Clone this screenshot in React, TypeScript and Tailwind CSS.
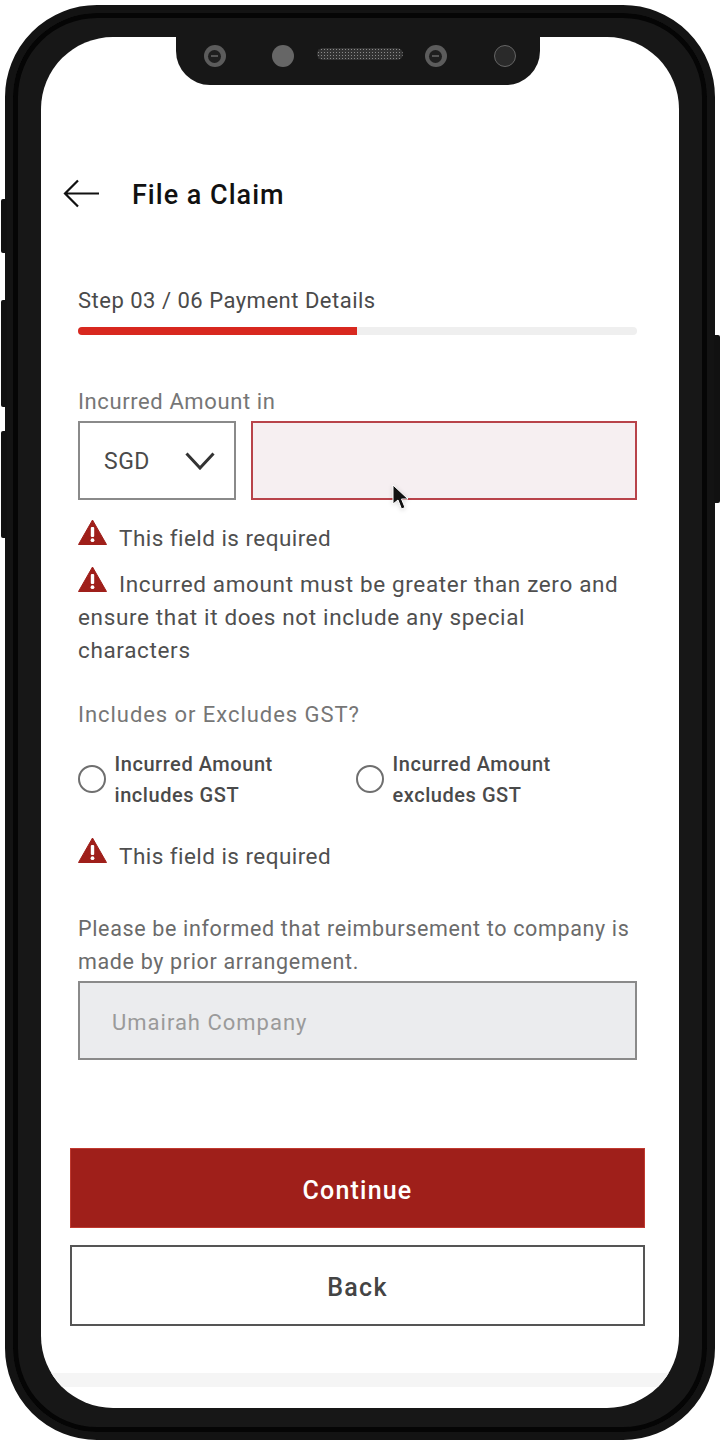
const FONT = "font-['Roboto','Liberation_Sans',sans-serif]";

const WarnIcon = ({ className = "" }: { className?: string }) => (
  <svg width="29" height="27" viewBox="0 0 29 27" className={`shrink-0 ${className}`}>
    <path d="M14.5 1 L28.5 25.5 L0.5 25.5 Z" fill="#9f1f1a" stroke="#9f1f1a" strokeLinejoin="round" />
    <rect x="12.8" y="8" width="3.4" height="10" rx="1" fill="#fff" />
    <circle cx="14.5" cy="21.2" r="1.9" fill="#fff" />
  </svg>
);

const Lens = () => (
  <div className="w-[22px] h-[22px] rounded-full bg-[#5c5c5c] flex items-center justify-center">
    <div className="w-[13px] h-[13px] rounded-full bg-[#1f1f1f] flex items-center justify-center">
      <div className="w-[7px] h-[2px] bg-[#555]" />
    </div>
  </div>
);

const Radio = ({ line1, line2 }: { line1: string; line2: string }) => (
  <div className="flex items-center w-[278px]">
    <div className="w-[28px] h-[28px] mb-[2px] rounded-full border-2 border-[#6f6f6f] bg-white shrink-0" />
    <div className="ml-[8.5px] text-[20px] leading-[31px] font-medium text-[#4a4a4a] tracking-[0.55px]">
      <div>{line1}</div>
      <div>{line2}</div>
    </div>
  </div>
);

const FieldError = ({ className }: { className: string }) => (
  <div className={`flex items-start h-[27px] ${className}`}>
    <WarnIcon />
    <span className="ml-[12px] mt-[4px] text-[22.5px] leading-[30px] text-[#4f4f4f] tracking-[0.45px]">This field is required</span>
  </div>
);

export default function App() {
  return (
    <div className={`relative w-[722px] h-[1444px] bg-white pl-[5px] pt-[5px] overflow-hidden ${FONT}`}>
      {/* side buttons */}
      <div className="absolute left-[1px] top-[199px] w-[6px] h-[54px] bg-[#111] rounded-l-[2px]" />
      <div className="absolute left-[1px] top-[300px] w-[6px] h-[107px] bg-[#111] rounded-l-[2px]" />
      <div className="absolute left-[1px] top-[431px] w-[6px] h-[107px] bg-[#111] rounded-l-[2px]" />
      <div className="absolute left-[714px] top-[335px] w-[6px] h-[168px] bg-[#111] rounded-r-[2px]" />

      <div className="w-[710px] h-[1435px] bg-[#171717] border-[8px] border-[#131313] shadow-[inset_0_0_0_5px_#050505] rounded-[92px] pl-[28px] pr-[28px] pt-[24px]">
        <div className="relative w-[638px] h-[1371px] bg-white rounded-[72px] overflow-hidden flex flex-col">
          {/* notch */}
          <div className="self-center ml-[-5px] w-[364px] h-[48px] bg-[#171717] rounded-b-[34px] flex items-center pl-[28px] pb-[10px] shrink-0">
            <Lens />
            <div className="ml-[46px] w-[22px] h-[22px] rounded-full bg-[#666]" />
            <div className="ml-[23px] mb-[4px] w-[86px] h-[12px] rounded-full bg-[#333] bg-[radial-gradient(#8a8a8a_1px,transparent_1px)] bg-[length:3px_3px]" />
            <div className="ml-[22px]"><Lens /></div>
            <div className="ml-[47px] w-[22px] h-[22px] rounded-full bg-[#2a2a2a] border border-[#666]" />
          </div>

          {/* header */}
          <div className="mt-[90px] ml-[22px] flex items-center h-[40px] shrink-0">
            <svg width="37" height="30" viewBox="0 0 37 30" fill="none" stroke="#111" strokeWidth="2.2" className="-mt-[2px]">
              <path d="M36 14.5 H2 M15 1.5 L2 14.5 L15 27.5" />
            </svg>
            <h1 className="ml-[32px] mt-[1px] text-[27px] font-medium text-[#111] tracking-[1px]">File a Claim</h1>
          </div>

          <div className="ml-[37px] mr-[42px] flex flex-col shrink-0">
            <div className="mt-[71px] text-[22px] leading-[30px] text-[#4a4a4a] tracking-[0.5px]">Step 03 / 06 Payment Details</div>
            <div className="mt-[11px] h-[8px] bg-[#efefef] rounded-full overflow-hidden">
              <div className="w-[279px] h-full bg-[#d8281f]" />
            </div>

            <div className="mt-[52px] text-[22px] leading-[30px] text-[#767676] tracking-[0.6px]">Incurred Amount in</div>
            <div className="mt-[4px] flex gap-[15px]">
              <div className="w-[158px] h-[79px] border-2 border-[#8a8a8a] flex items-center justify-between pl-[24px] pr-[19px]">
                <span className="mt-[3px] text-[23px] text-[#4a4a4a] tracking-[0.5px]">SGD</span>
                <svg width="30" height="18" viewBox="0 0 30 18" fill="none" stroke="#333" strokeWidth="3">
                  <path d="M1.5 1.5 L15 16 L28.5 1.5" />
                </svg>
              </div>
              <div className="relative flex-1 h-[79px] border-2 border-[#b8434a] bg-[#f6eff1]" />
            </div>

            <FieldError className="mt-[19px]" />

            <div className="mt-[22px] text-[22.5px] leading-[33px] text-[#4f4f4f] tracking-[0.65px]">
              <div className="flex items-start">
                <WarnIcon className="-mt-[2px]" />
                <span className="ml-[12px]">Incurred amount must be greater than zero and</span>
              </div>
              <div>ensure that it does not include any special</div>
              <div>characters</div>
            </div>

            <div className="mt-[33px] text-[22px] leading-[30px] text-[#767676] tracking-[0.95px]">Includes or Excludes GST?</div>

            <div className="mt-[19px] flex">
              <Radio line1="Incurred Amount" line2="includes GST" />
              <Radio line1="Incurred Amount" line2="excludes GST" />
            </div>

            <FieldError className="mt-[26px]" />

            <div className="mt-[48px] text-[21.5px] leading-[33px] text-[#6b6b6b] tracking-[0.65px]">
              <div>Please be informed that reimbursement to company is</div>
              <div>made by prior arrangement.</div>
            </div>

            <div className="mt-[3px] h-[79px] border-2 border-[#8a8a8a] bg-[#ebecee] flex items-center pl-[32px] pt-[3px] text-[22px] text-[#9a9a9a] tracking-[1px]">
              Umairah Company
            </div>
          </div>

          <div className="mt-[88px] ml-[29px] mr-[34px] flex flex-col gap-[17px] shrink-0">
            <button className="h-[80px] pt-[5px] bg-[#9f1f1a] border border-[#c0392f] text-white text-[25px] font-medium tracking-[1.2px]">Continue</button>
            <button className="h-[81px] pt-[5px] bg-white border-2 border-[#555] text-[#444] text-[25px] font-medium tracking-[1.3px]">Back</button>
          </div>

          <div className="mt-[47px] h-[14px] bg-[#f5f5f5] shrink-0" />

          {/* mouse cursor */}
          <svg width="18" height="28" viewBox="0 0 18 28" className="absolute left-[351px] top-[447px] drop-shadow-sm">
            <path d="M1 1 L1 20 L6 16 L9.5 25 L13 23.5 L9.5 15 L16 15 Z" fill="#111" stroke="#fff" strokeWidth="1" />
          </svg>
        </div>
      </div>
    </div>
  );
}
